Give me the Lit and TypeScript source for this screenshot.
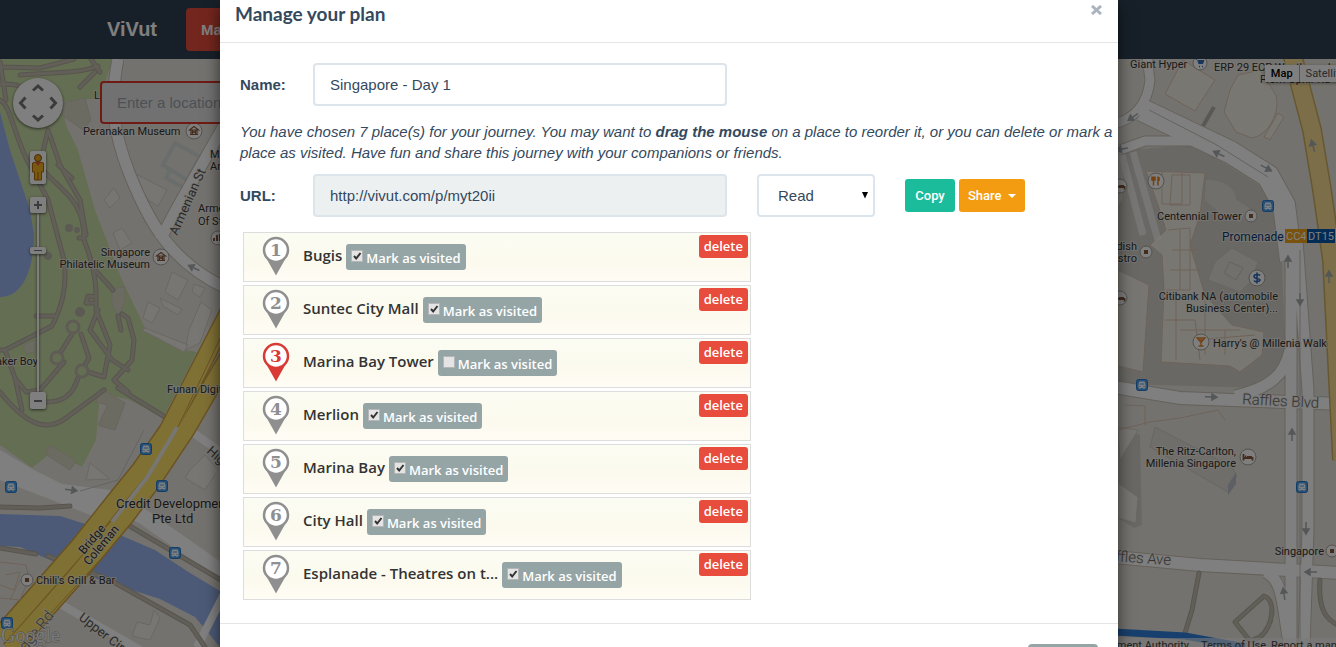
import { LitElement, html, svg, css } from "lit";
import { customElement, property } from "lit/decorators.js";

interface Place {
  name: string;
  visited: boolean;
}

const PLACES: Place[] = [
  { name: "Bugis", visited: true },
  { name: "Suntec City Mall", visited: true },
  { name: "Marina Bay Tower", visited: false },
  { name: "Merlion", visited: true },
  { name: "Marina Bay", visited: true },
  { name: "City Hall", visited: true },
  { name: "Esplanade - Theatres on t...", visited: true },
];

const bus = (x: number, y: number) => svg`
  <g transform="translate(${x} ${y})">
    <rect x="-5.5" y="-5.5" width="11" height="11" rx="2" fill="#4aa0f0" stroke="#2b78c5"></rect>
    <path d="M-3.5 3V-1L-2.5-3.5H2.5L3.5-1V3H2.5V4H1.5V3H-1.5V4H-2.5V3Z" fill="#fff"></path>
    <path d="M-2.2-1H2.2M-2.5 1.5H-1.5M1.5 1.5H2.5" stroke="#4aa0f0" fill="none"></path>
  </g>`;

const poi = (x: number, y: number, glyph: unknown, r = 7) => svg`
  <g transform="translate(${x} ${y})">
    <circle r=${r} fill="#fff" stroke="#a8a49c"></circle>
    ${glyph}
  </g>`;

const square = svg`<rect x="-2" y="-2" width="4" height="4" fill="#8a5a3c"></rect>`;
const museum = svg`<path d="M-4.5-1L0-4.5L4.500-1ZM-4 3.5H4M-3-.5V3.500M3-.5V3.500M-1.500 3V0L0 1.500L1.500 0V3" fill="none" stroke="#8a5a3c" stroke-width="1.200"></path>`;
const bed = svg`<path d="M-4.500-3V3.500M-4.500 1H4.500V3.500M-1 0H4M-3-.5H-1.800" fill="none" stroke="#8a5a3c" stroke-width="1.800"></path>`;
const arrow = (x: number, y: number, a: number) => svg`
  <path transform="translate(${x} ${y}) rotate(${a})" d="M-6 0H3M1-3L6 0L1 3Z" fill="#a9aeb0" stroke="#a9aeb0" stroke-width="1.500"></path>`;

@customElement("city-map")
class CityMap extends LitElement {
  static styles = css`
    :host { display: block; width: 100%; height: 100%; background: #e9e5dc; }
    svg { display: block; width: 100%; height: 100%; }
    text { font-family: Roboto, sans-serif; font-size: 11px; fill: #333; stroke: #f4f1ea; stroke-width: 2px; stroke-opacity: .7; paint-order: stroke; }
    .road { font-size: 13px; fill: #555; }
    .avenue { font-size: 15px; fill: #666; font-weight: 300; }
    .big { font-size: 13px; }
    .mid { font-size: 12px; }
    .google { font-family: "Liberation Serif", serif; font-size: 20px; fill: #f2f2f2; stroke: #888; stroke-width: 1px; }
    .station { fill: #0a3c7a; font-size: 12px; }
    .badge { fill: #fff; stroke: none; }
    .legal { font-size: 11px; fill: #444; stroke: none; }
    .case { fill: none; stroke: #c9c1b5; }
    .white { fill: none; stroke: #fff; }
    .path { fill: none; stroke: #c4bdb1; stroke-width: 3; stroke-linejoin: round; stroke-linecap: round; }
    .pathcase { fill: none; stroke: #b0aa9c; stroke-width: 5; stroke-linejoin: round; stroke-linecap: round; }
    .bld { fill: #efece5; stroke: #d5d0c8; }
    .park { fill: #d6d6c2; stroke: #cfccba; }
    .shop { fill: #f3eee3; stroke: #dcc5b2; }
  `;

  render() {
    const trails =
      "M0 67L40 68L74 59M20 75C50 72 80 74 98 66M80 87L95 72M91 59L100 72M0 84C20 84 24 86 20 95M0 62L6 100M0 100C10 105 13 130 26 158L48 200L64 260C68 290 60 310 52 326" +
      "M48 130L40 165M48 130L60 165L80 200L86 235M58 165L72 178M45 172C60 190 85 200 84 240C98 275 96 295 96 310" +
      "M36 316H56M52 326L5 350L0 350M72 334L57 358M81 334L89 358L82 370M98 310L90 330L112 360L128 370M95 270L113 290" +
      "M118 316L121 330M122 314L128 318L134 340L132 360L114 380L128 392M64 362L40 390L26 392L15 378L5 350" +
      "M96 310L110 345L104 377L88 372M78 378C72 398 60 402 46 402" +
      "M15 378L22 410M0 392C30 430 50 430 66 418L104 390M118 388L165 417M96 303L86 303L88 296L96 297M79 238H84";
    return html`
      <svg viewBox="0 59 1336 588" preserveAspectRatio="xMinYMin slice" role="img" aria-label="Map of Singapore">
        <rect y="59" width="1336" height="588" fill="#e9e5dc"></rect>
        <path d="M0 59H113L105 82L100 98L62 102L66 125L78 150L95 210L122 280L145 328L185 350L197 352L163 418L130 400L100 393L96 440L82 467L52 452L32 468L0 445Z" fill="#c8dca6"></path>
        <path d="M0 112L10 150L30 210L34 235C34 262 26 297 0 297Z" fill="#98b5ee"></path>
        <path d="M0 514L60 516L120 535L155 550L190 573L220 591V647L195 617L160 599L100 580L50 560L20 547L0 546Z" fill="#98b5ee"></path>
        <path d="M100 388L125 403L115 430L98 427L104 405L96 402Z" fill="#e4e0d6"></path>
        <g class="park">
          <path d="M63 103L85 98L91 120L83 130L62 115Z"></path>
          <path d="M112 288L125 287V300L119 318L112 305Z"></path>
          <path d="M100 388L125 403L115 430L98 425L108 405L96 402Z"></path>
          <path d="M50 445L76 461L70 470L45 454Z"></path>
          <path d="M23 345L36 340L34 352L26 354Z"></path>
        </g>
        <g class="bld">
          <path d="M113 233L122 228L132 243L120 250Z"></path>
          <path d="M132 172L167 190L158 206L148 200Z"></path>
          <path d="M172 272L188 280L178 300L165 292Z"></path>
          <path d="M148 302L160 308L152 323L143 318Z"></path>
          <path d="M160 298L182 309L178 315L163 306Z"></path>
          <path d="M201 302L212 310L200 343L185 350L189 330Z"></path>
          <path d="M145 328L188 345L184 352L142 330Z"></path>
          <path d="M190 470L205 455L218 470L205 490L185 478Z"></path>
          <path d="M137 622L150 625L154 610L160 618L150 640L132 636Z"></path>
          <path d="M90 463L110 479L86 480Z"></path>
          <path d="M104 200L114 188L120 198L110 208Z"></path>
          <path d="M194 284L205 288L200 297L192 292Z"></path>
        </g>
        <path d="M175 143L200 157L187 180L163 165ZM170 170L166 178L188 190" fill="none" stroke="#d3dbd9" stroke-width="4"></path>
        <path class="pathcase" d=${trails}></path>
        <path class="path" d=${trails}></path>
        <g fill="#b8b4a8"><circle cx="69" cy="228" r="4"></circle><circle cx="77" cy="230" r="3"></circle><circle cx="48" cy="256" r="4"></circle><circle cx="80" cy="312" r="5"></circle></g>
        <g fill="#c8dca6" stroke="#beb7aa" stroke-width="3"><circle cx="73" cy="327" r="6"></circle><circle cx="57" cy="358" r="6"></circle><circle cx="82" cy="371" r="6"></circle></g>

        <path class="case" stroke-width="13" d="M118 59C110 100 112 130 130 175S170 262 226 288M226 122L176 210L160 240"></path>
        <path class="white" stroke-width="11" d="M118 59C110 100 112 130 130 175S170 262 226 288M226 122L176 210L160 240"></path>
        <path d="M0 450L34 470L62 484L110 490L118 495L95 517L60 503L0 480Z" fill="#fff"></path>
        <path class="white" stroke-width="15" d="M112 500L145 518L226 575"></path>
        <path class="white" stroke-width="8" d="M185 427L225 455M62 605L140 650M226 590L197 647"></path>
        <path class="pathcase" d="M0 507L40 508L70 506M0 548L36 554M128 525L226 583M48 556L110 580L190 625L205 647"></path>
        <path class="path" d="M0 507L40 508L70 506M0 548L36 554M128 525L226 583M48 556L110 580L190 625L205 647"></path>
        <path d="M80 491L118 480L144 430" fill="none" stroke="#cac8ca"></path>

        <path fill="none" stroke="#d3a648" stroke-width="19" d="M240 290L168 430L140 470L118 497L80 545L0 636M244 330L186 430L150 484L125 517L75 577L10 650"></path>
        <path fill="none" stroke="#ffe168" stroke-width="16" d="M240 290L168 430L140 470L118 497L80 545L0 636M244 330L186 430L150 484L125 517L75 577L10 650"></path>
        <path fill="none" stroke="#d3a648" stroke-width="1" d="M236 305L178 427M100 560L40 625"></path>
        <path fill="none" stroke="#f0ece0" stroke-width="4" d="M177 427L172 436L148 476L112 522"></path>
        <g fill="none" stroke="#dcc5b2"><path d="M0 562L26 565L29 578L20 600L0 598M5 575L20 572L14 590L0 585M10 600L20 580"></path></g>

        ${arrow(194, 268, 205)}${arrow(71, 490, 8)}
        ${bus(146, 449)}${bus(162, 486)}${bus(11, 487)}${bus(175, 553)}${bus(7, 623)}
        ${poi(194, 131, museum, 8)}${poi(161, 257, museum, 8)}${poi(27, 580, square, 6)}
        ${poi(218, 238, svg`<path d="M-4 3V0M-1 3V-3M2 3V-4" stroke="#8a5a3c" stroke-width="2"></path>`, 7)}
        <text x="94" y="99">L</text>
        <text x="83" y="135">Peranakan Museum</text>
        <text x="210" y="158">Ma</text><text x="210" y="170">Art</text>
        <text x="198" y="212">Armenian</text><text x="198" y="225">Of St</text>
        <text x="150" y="256" text-anchor="end">Singapore</text>
        <text x="150" y="268" text-anchor="end">Philatelic Museum</text>
        <text x="38" y="365" text-anchor="end">Quaker Boy</text>
        <text x="167" y="393">Funan Digital</text>
        <text class="big" x="116" y="508">Credit Development</text>
        <text class="big" x="152" y="523">Pte Ltd</text>
        <text x="36" y="584">Chili's Grill &amp; Bar</text>
        <text class="road" transform="translate(177 236) rotate(-66)">Armenian St</text>
        <text class="mid" transform="translate(84 555) rotate(-50)">Bridge</text>
        <text class="mid" transform="translate(89 566) rotate(-50)">Coleman</text>
        <text class="avenue" transform="translate(26 652) rotate(-52)">dge Rd</text>
        <text class="road" transform="translate(78 619) rotate(38)">Upper Circular</text>
        <text class="road" transform="translate(206 452) rotate(42)">High</text>
        <text class="google" x="1" y="642">Google</text>

        <path d="M1125 150L1195 145L1262 187L1280 220L1286 360L1262 388L1118 384V205L1122 200Z" fill="#d5d1c9"></path>
        <path d="M1118 270L1149 285L1143 372L1118 366Z" fill="#efece5" stroke="#dcc5b2"></path>
        <g class="shop">
          <path d="M1183 60L1215 80L1195 111L1165 94Z"></path>
          <path d="M1238 75L1260 70L1276 95C1280 112 1270 134 1252 138L1236 132L1224 112L1230 90Z"></path>
          <path d="M1278 113L1284 117L1270 140L1264 137Z"></path>
          <path d="M1146 171L1205 173L1200 215L1190 245L1205 295L1232 325L1264 332L1262 355L1240 372L1230 366L1161 362L1164 290L1162 255L1150 245L1166 230L1158 205Z"></path>
        </g>
        <path d="M1162 172V204H1182V172M1172 175H1190V205H1170ZM1168 230L1190 228V290H1166M1172 250H1198M1170 270H1200M1180 230V290M1176 295V360M1165 320H1195L1200 360M1205 300V355M1195 340L1255 335M1225 330V355M1180 330H1240" fill="none" stroke="#dcc5b2"></path>
        <path d="M1206 180C1220 180 1235 185 1236 200L1250 208L1240 222L1222 215L1205 200Z" fill="#e2dfd9"></path>
        <path d="M1232 248L1258 262L1252 280L1240 292L1208 280L1215 262Z" fill="#e3e0db" stroke="#cfccc8"></path>
        <path d="M1230 262L1243 268L1236 280L1224 273Z" fill="none" stroke="#c8c6c4"></path>
        <path d="M1155 427L1232 467L1237 476L1228 492L1150 447Z" fill="#e0ddd7" stroke="#d0ccc4"></path>
        <path d="M1236 472V484L1228 495V485Z" fill="#b9c0c8"></path>
        <path d="M1118 427L1140 435L1142 525L1134 528L1118 518Z" fill="#d5d1c9"></path>
        <path d="M1118 483L1138 497L1136 523L1118 518ZM1118 427L1138 430L1120 460Z" class="bld"></path>
        <path d="M1125 405L1145 406V425M1118 430L1150 422L1180 418L1218 410L1225 420" fill="none" stroke="#dcc5b2"></path>

        <g class="case">
          <path stroke-width="11" d="M1120 150L1145 141L1200 141M1147 57L1150 80C1148 100 1138 118 1114 124"></path>
          <path stroke-width="24" d="M1142 110L1230 152L1268 176L1284 205L1291 260"></path>
          <path stroke-width="14" d="M1114 387L1180 398L1340 404M1114 557L1200 565L1340 573"></path>
          <path stroke-width="13" d="M1291 240V647M1297 240L1308 390V530L1304 647M1235 396C1270 388 1285 375 1290 350M1265 572C1285 580 1282 610 1290 647"></path>
        </g>
        <g class="white">
          <path stroke-width="9" d="M1120 150L1145 141L1200 141M1147 57L1150 80C1148 100 1138 118 1114 124"></path>
          <path stroke-width="7" d="M1122 155L1143 235M1133 152L1158 240" stroke-opacity=".6"></path>
          <path stroke-width="22" d="M1142 110L1230 152L1268 176L1284 205L1291 260"></path>
          <path stroke-width="12" d="M1114 387L1180 398L1340 404M1114 557L1200 565L1340 573"></path>
          <path stroke-width="11" d="M1291 240V647M1297 240L1308 390V530L1304 647M1235 396C1270 388 1285 375 1290 350M1265 572C1285 580 1282 610 1290 647"></path>
        </g>
        <path d="M1149 110L1215 144L1268 177M1300 250V647" fill="none" stroke="#c9c4bc"></path>
        <path fill="none" stroke="#cfae62" stroke-width="20" d="M1291 50L1312 130L1322 190L1332 260L1342 460"></path>
        <path fill="none" stroke="#f8dd90" stroke-width="17" d="M1291 50L1312 130L1322 190L1332 260L1342 460"></path>
        <path d="M1203 126L1214 107" fill="none" stroke="#b5b1a9" stroke-width="4"></path>
        <path class="pathcase" d="M1199 573L1192 610L1185 633M1264 596C1276 600 1274 625 1260 637L1250 641L1235 622ZM1320 580C1318 610 1326 620 1340 626"></path>
        <path class="path" d="M1199 573L1192 610L1185 633M1264 596C1276 600 1274 625 1260 637L1250 641L1235 622ZM1320 580C1318 610 1326 620 1340 626"></path>
        <path d="M1114 632L1185 636L1245 647" fill="none" stroke="#2f80dc" stroke-width="7"></path>

        ${arrow(1133, 117, 145)}${arrow(1219, 154, 205)}${arrow(1266, 168, 28)}${arrow(1122, 149, 170)}${arrow(1313, 146, -105)}
        ${arrow(1288, 262, -90)}${arrow(1300, 299, 90)}${arrow(1329, 277, -90)}${arrow(1211, 397, 2)}
        ${arrow(1292, 435, -90)}${arrow(1306, 528, 90)}${arrow(1311, 572, 180)}${arrow(1284, 594, -98)}
        ${bus(1268, 206)}${bus(1142, 385)}${bus(1302, 487)}
        ${poi(1200, 63, svg`<path d="M-5-4H-3L-1.500 1H3L4.500-3H-3Z" fill="#2f6cb5"></path><path d="M-1 3.500H0M2 3.500H3" stroke="#2f6cb5" stroke-width="1.500"></path>`)}
        ${poi(1156, 181, svg`<path d="M-2.500-4.500V4.500M-4-4.500V-1H-1V-4.500M2-4.500V4.500M3-4V0" stroke="#e5821e" stroke-width="1.500" fill="none"></path>`, 8)}
        ${poi(1251, 216, square, 6)}${poi(1146, 252, square, 6)}${poi(1332, 551, square, 6)}
        ${poi(1120, 186, bed)}${poi(1120, 298, bed)}${poi(1248, 457, bed, 8)}
        ${poi(1257, 278, svg`<path d="M3-2.500C2-4-3-4-3-1.500S3 .5 3 2S-2 4.500-3 2.500M0-5.500V5.500" stroke="#2f6cb5" stroke-width="1.600" fill="none"></path>`, 8)}
        ${poi(1201, 342, svg`<path d="M-4-4H4L0 0.500ZM0 0V4M-2.500 4H2.500M-2-2H2" stroke="#e5821e" stroke-width="1.300" fill="none"></path>`, 8)}

        <text x="1130" y="68">Giant Hyper</text>
        <text x="1214" y="71">ERP 29 ECP Westbound</text>
        <text x="1260" y="83">From Ophir Rd</text>
        <text x="1157" y="220">Centennial Tower</text>
        <text class="station" x="1222" y="241">Promenade</text>
        <rect x="1285" y="229" width="22" height="14" fill="#f3a41c"></rect>
        <rect x="1307" y="229" width="28" height="14" fill="#0457ac"></rect>
        <text class="badge" x="1286" y="240">CC4</text>
        <text class="badge" x="1308" y="240">DT15</text>
        <text x="1137" y="250" text-anchor="end">Swedish</text>
        <text x="1137" y="262" text-anchor="end">Bistro</text>
        <text x="1278" y="300" text-anchor="end">Citibank NA (automobile</text>
        <text x="1278" y="312" text-anchor="end">Business Center)...</text>
        <text x="1213" y="347">Harry's @ Millenia Walk</text>
        <text class="avenue" transform="translate(1242 404) rotate(3)">Raffles Blvd</text>
        <text x="1236" y="455" text-anchor="end">The Ritz-Carlton,</text>
        <text x="1236" y="467" text-anchor="end">Millenia Singapore</text>
        <text x="1324" y="555" text-anchor="end">Singapore</text>
        <text class="avenue" transform="translate(1098 560) rotate(4)">Raffles Ave</text>
        <rect x="1118" y="638" width="218" height="9" fill="#f5f5f5" fill-opacity=".6"></rect>
        <text class="legal" x="1189" y="649" text-anchor="end">Government Authority</text>
        <text class="legal" x="1201" y="649">Terms of Use</text>
        <text class="legal" x="1271" y="649">Report a map error</text>
      </svg>`;
  }
}

@customElement("plan-row")
class PlanRow extends LitElement {
  @property({ type: Number }) index = 1;
  @property({ attribute: false }) place!: Place;

  static styles = css`
    :host { display: block; }
    .row {
      display: flex; align-items: flex-start; box-sizing: border-box; height: 50px;
      padding: 2px 2px 0 18px; border: 1px solid #ddd;
      background: linear-gradient(#fbfcf3, #fcfaee 60%, #fffcf5);
    }
    .pin { flex: none; width: 28px; height: 40px; margin-top: 1px; color: #8f8f8f; }
    .pin.open { color: #d93a35; }
    .pin text { font: bold 17px "DejaVu Serif", serif; fill: currentColor; text-anchor: middle; }
    .name {
      margin: 8px 4px 0 13px; font: 600 15px/24px "Open Sans", sans-serif; color: #333; white-space: nowrap;
    }
    .mark {
      display: flex; align-items: center; gap: 3px; box-sizing: border-box; height: 26px; margin-top: 9px;
      padding: 2px 5px 0; border-radius: 3px; background: #95a5a6; color: #fff;
      font: 600 13px/20px "Open Sans", sans-serif; white-space: nowrap;
    }
    .box {
      appearance: none; width: 12px; height: 12px; margin: 0 0 4px; border: 1px solid #b5b5b5;
      background: #e4e4e4;
    }
    .tick { grid-area: 1 / 1; width: 12px; height: 12px; }
    .check { display: grid; }
    .check .box { grid-area: 1 / 1; }
    .delete {
      height: 23px; margin-left: auto; padding: 0 5px; border: 0; border-radius: 3px;
      background: #e74c3c; color: #fff; font: 600 13px/21px "Open Sans", sans-serif;
    }
  `;

  render() {
    const { name, visited } = this.place;
    return html`
      <div class="row">
        <svg class="pin ${visited ? "" : "open"}" viewBox="0 0 28 40">
          <path d="M2.500 19L14 39.500L25.500 19Z" fill="currentColor"></path>
          <circle cx="14" cy="14" r="12" fill="#fff" stroke="currentColor" stroke-width="2.500"></circle>
          <text x="14" y="20">${this.index}</text>
        </svg>
        <span class="name">${name}</span>
        <label class="mark">
          <span class="check">
            <input class="box" type="checkbox" .checked=${visited} />
            ${visited
              ? svg`<svg class="tick" viewBox="0 0 12 12"><path d="M3 6L5.200 8.500L9.500 3" fill="none" stroke="#333" stroke-width="2"></path></svg>`
              : ""}
          </span>
          Mark as visited
        </label>
        <button class="delete" type="button">delete</button>
      </div>`;
  }
}

@customElement("app-root")
class AppRoot extends LitElement {
  static styles = css`
    :host {
      display: block; position: relative; height: 100vh; overflow: hidden;
      font: 15px/21px "Liberation Sans", Arial, sans-serif; color: #34495e;
    }
    .page { display: flex; flex-direction: column; height: 100%; }
    .nav { display: flex; align-items: center; gap: 29px; height: 59px; flex: none; padding-left: 107px; background: #2f4052; }
    .brand { color: #fff; font-size: 20px; font-weight: bold; text-decoration: none; }
    .tab { height: 43px; padding: 0 15px; border: 0; border-radius: 4px; background: #e74c3c; color: #fff; font: bold 15px "Liberation Sans", sans-serif; }
    .canvas { position: relative; flex: 1; min-height: 0; }
    .search {
      position: absolute; left: 100px; top: 22px; box-sizing: border-box; width: 300px; height: 43px;
      padding: 0 15px; border: 2px solid #e0352b; border-radius: 4px; background: #e2e2e2; font: 15px "Liberation Sans", sans-serif;
    }
    .search::placeholder { color: #9aa3ac; }
    .ctl { position: absolute; padding: 0; border: 0; border-radius: 2px; background: #fff; box-shadow: 0 1px 3px rgba(0, 0, 0, .6); }
    .ctl svg { display: block; }
    .pan { left: 13px; top: 19px; width: 50px; height: 50px; border-radius: 50%; }
    .peg { left: 30px; top: 92px; width: 16px; height: 33px; }
    .in { left: 30px; top: 138px; width: 16px; height: 16px; }
    .track { left: 37px; top: 154px; width: 2px; height: 179px; }
    .thumb { left: 30px; top: 188px; width: 16px; height: 7px; }
    .out { left: 30px; top: 333px; width: 16px; height: 17px; }
    .types { position: absolute; right: -16px; top: 6px; display: flex; box-shadow: 0 1px 3px rgba(0, 0, 0, .5); }
    .type { height: 17px; padding: 0 6px; border: 0; border-right: 1px solid #aaa; background: #fff; color: #555; font: 11px/17px Roboto, sans-serif; }
    .type.on { color: #000; font-weight: 500; }

    .overlay { position: absolute; inset: 0; padding-left: 2px; background: rgba(0, 0, 0, .5); }
    .modal { max-width: 898px; margin: 0 auto; background: #fff; box-shadow: 0 5px 15px rgba(0, 0, 0, .6); }
    .head { display: flex; justify-content: space-between; align-items: flex-start; padding: 2px 15px 16px; border-bottom: 1px solid #e5e5e5; }
    .title { margin: 0; font: bold 19px/24px Lato, sans-serif; }
    .close { padding: 3px 1px; border: 0; background: none; color: #abb4be; }
    .close svg { display: block; }
    .body { padding: 20px 3px 23px 20px; }
    .line { display: grid; grid-template-columns: 73px minmax(0, 414px) 118px auto; align-items: center; }
    .label { font-weight: bold; }
    .field {
      box-sizing: border-box; width: 100%; height: 43px; padding: 0 15px; border: 2px solid #dce4ec; border-radius: 4px;
      background: #fff; color: #34495e; font: 15px "Liberation Sans", sans-serif; outline: none;
    }
    .field[readonly] { background: #ecf0f1; }
    .note { margin: 15px 0 11px; font-style: italic; }
    .pick { display: grid; align-items: center; width: 118px; margin-left: 30px; }
    .pick .field, .caret { grid-area: 1 / 1; }
    .pick .field { appearance: none; padding: 0 19px; }
    .caret { justify-self: end; margin-right: 7px; pointer-events: none; }
    .actions { display: flex; gap: 4px; margin-left: 60px; }
    .btn {
      display: flex; align-items: center; justify-content: center; gap: 6px; min-width: 50px; height: 33px; padding: 0 9px; border: 0; border-radius: 3px;
      color: #fff; font: 500 13px Roboto, sans-serif;
    }
    .copy { background: #1abc9c; }
    .share { background: #f39c12; }
    .list { display: flex; flex-direction: column; gap: 3px; max-width: 508px; margin: 15px 0 0 3px; padding: 0; list-style: none; }
    .foot { display: flex; justify-content: flex-end; padding: 20px; border-top: 1px solid #e5e5e5; }
    .done { width: 70px; height: 43px; border: 0; border-radius: 4px; background: #95a5a6; color: #fff; font: 15px "Liberation Sans", sans-serif; }
  `;

  render() {
    return html`
      <div class="page">
        <nav class="nav">
          <a class="brand" href="#">ViVut</a>
          <button class="tab" type="button">Manage plan</button>
        </nav>
        <div class="canvas">
          <city-map></city-map>
          <input class="search" type="text" placeholder="Enter a location" aria-label="Location" />
          <button class="ctl pan" type="button" aria-label="Pan">
            <svg width="50" height="50" fill="none" stroke="#777" stroke-width="3">
              <path d="M20 12.500L25 8L30 12.500M20 37.500L25 42L30 37.500M12.500 19.500L7.500 25L12.500 30.500M37.500 19.500L42.500 25L37.500 30.500"></path>
            </svg>
          </button>
          <button class="ctl peg" type="button" aria-label="Street View">
            <svg width="16" height="33">
              <path d="M2.500 12Q8 9 13.500 12V21H11.500V29H4.500V21H2.500Z" fill="#f2b01e" stroke="#a86b0c"></path>
              <path d="M5 11L8 15L11 11Z" fill="#e2574a"></path><path d="M8 21V29" stroke="#a86b0c"></path>
              <circle cx="8" cy="7" r="3.500" fill="#e8a21a" stroke="#8b5a12"></circle>
            </svg>
          </button>
          <div class="ctl track"></div>
          <button class="ctl in" type="button" aria-label="Zoom in"><svg width="16" height="16" stroke="#777" stroke-width="2"><path d="M4 8H12M8 4V12"></path></svg></button>
          <button class="ctl thumb" type="button" aria-label="Zoom level"><svg width="16" height="7" stroke="#777"><path d="M4 3.500H12"></path></svg></button>
          <button class="ctl out" type="button" aria-label="Zoom out"><svg width="16" height="16" stroke="#777" stroke-width="2"><path d="M4 8H12"></path></svg></button>
          <div class="types">
            <button class="type on" type="button">Map</button>
            <button class="type" type="button">Satellite</button>
          </div>
        </div>
      </div>

      <div class="overlay">
        <section class="modal" role="dialog" aria-labelledby="title">
          <header class="head">
            <h4 class="title" id="title">Manage your plan</h4>
            <button class="close" type="button" aria-label="Close">
              <svg width="11" height="10" stroke="currentColor" stroke-width="3"><path d="M1 1L10 9M10 1L1 9"></path></svg>
            </button>
          </header>
          <div class="body">
            <div class="line">
              <label class="label" for="name">Name:</label>
              <input class="field" id="name" type="text" .value=${"Singapore - Day 1"} />
            </div>
            <p class="note">
              You have chosen 7 place(s) for your journey. You may want to <b>drag the mouse</b> on a place to reorder it, or you can delete or mark a place as visited. Have fun and share this journey with your companions or friends.
            </p>
            <div class="line">
              <label class="label" for="url">URL:</label>
              <input class="field" id="url" type="text" readonly .value=${"http://vivut.com/p/myt20ii"} />
              <div class="pick">
                <select class="field" aria-label="Access"><option>Read</option></select>
                <svg class="caret" width="6" height="7"><path d="M0 0H6L3 6.500Z" fill="#000"></path></svg>
              </div>
              <div class="actions">
                <button class="btn copy" type="button">Copy</button>
                <button class="btn share" type="button">Share <svg width="8" height="4"><path d="M0 0H8L4 4Z" fill="#fff"></path></svg></button>
              </div>
            </div>
            <ul class="list">
              ${PLACES.map((p, i) => html`<li><plan-row .index=${i + 1} .place=${p}></plan-row></li>`)}
            </ul>
          </div>
          <footer class="foot"><button class="done" type="button">Close</button></footer>
        </section>
      </div>`;
  }
}
